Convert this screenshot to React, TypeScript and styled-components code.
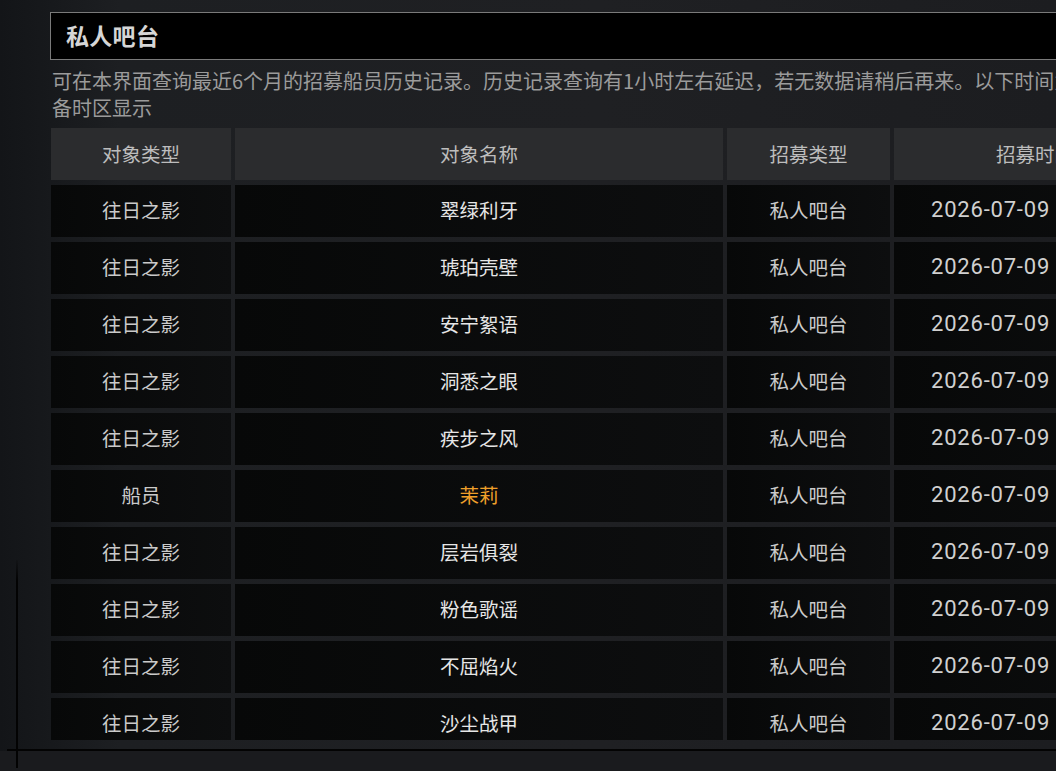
import React from "react";
import styled, { createGlobalStyle } from "styled-components";

const Global = createGlobalStyle`
  html, body {
    margin: 0;
    padding: 0;
    width: 1056px;
    height: 771px;
    overflow: hidden;
    background: #1c1e21;
  }
  body {
    font-family: "Noto Sans CJK SC", "Noto Sans", sans-serif;
  }
`;

const Screen = styled.div`
  position: relative;
  width: 1056px;
  height: 771px;
  overflow: hidden;
  background:
    linear-gradient(90deg, #131518 0px, #16181b 40px, #1d1f22 120px, #1f2023 600px, #1c1d20 1056px);
`;

const Page = styled.div`
  display: flex;
  flex-direction: column;
  width: 1140px;
  padding: 12px 0 0 50px;
  box-sizing: content-box;
`;

const TitleBox = styled.div`
  border: 1px solid #7a7a7a;
  background: #000;
  display: flex;
  align-items: center;
  padding: 0 0 3px 15px;
  box-sizing: content-box;
  height: 43px;
`;

const Title = styled.h1`
  margin: 0;
  font-size: 23px;
  font-weight: 700;
  color: #d6d6d6;
  letter-spacing: 0.3px;
`;

const Description = styled.p`
  margin: 7px 0 0 2px;
  width: 1048px;
  font-size: 20px;
  line-height: 27px;
  color: #9b9b9b;
`;

const TableClip = styled.div`
  margin-top: 7px;
  height: 612px;
  overflow: hidden;
`;

const Grid = styled.div`
  display: grid;
  grid-template-columns: 180px 488px 163px 282px;
  column-gap: 4px;
  row-gap: 5px;
  margin-left: 1px;
`;

const HeadCell = styled.div`
  height: 52px;
  box-sizing: border-box;
  padding-bottom: 2px;
  background: #2b2c2e;
  display: flex;
  align-items: center;
  justify-content: center;
  font-size: 19.5px;
  color: #bdbdbd;
`;

const Cell = styled.div<{ $tone?: "name" | "type" | "gold" }>`
  height: 52px;
  box-sizing: border-box;
  padding-bottom: 3px;
  background: linear-gradient(90deg, #070808, #0d0e0f);
  display: flex;
  align-items: center;
  justify-content: center;
  font-size: 19.5px;
  color: ${(p) =>
    p.$tone === "gold" ? "#f0a02a" : p.$tone === "name" ? "#e6e6e6" : "#cacaca"};
`;

const DateCell = styled(Cell)`
  justify-content: flex-start;
  padding-left: 37px;
  gap: 12px;
`;

const DateText = styled.span`
  font-family: Roboto, "Noto Sans", sans-serif;
  font-size: 22px;
  letter-spacing: 0.8px;
  color: #d0d0d0;
  white-space: nowrap;
`;

const FrameLineH = styled.div`
  position: absolute;
  left: 7px;
  right: 0;
  top: 749px;
  height: 2px;
  background: #030303;
`;

const FrameLineV = styled.div`
  position: absolute;
  left: 16px;
  top: 560px;
  width: 2px;
  height: 208px;
  background: linear-gradient(180deg, rgba(3,3,3,0.1) 0%, #030303 10%, #030303 100%);
`;

const BottomShade = styled.div`
  position: absolute;
  left: 0;
  right: 0;
  top: 751px;
  bottom: 0;
  background: #1a1b1e;
`;

type Row = { kind: string; name: string; time: string; gold?: boolean };

const rows: Row[] = [
  { kind: "往日之影", name: "翠绿利牙", time: "21:47:12" },
  { kind: "往日之影", name: "琥珀壳壁", time: "21:47:12" },
  { kind: "往日之影", name: "安宁絮语", time: "21:47:12" },
  { kind: "往日之影", name: "洞悉之眼", time: "21:47:12" },
  { kind: "往日之影", name: "疾步之风", time: "21:47:12" },
  { kind: "船员", name: "茉莉", time: "21:47:12", gold: true },
  { kind: "往日之影", name: "层岩俱裂", time: "21:47:12" },
  { kind: "往日之影", name: "粉色歌谣", time: "21:47:12" },
  { kind: "往日之影", name: "不屈焰火", time: "21:47:12" },
  { kind: "往日之影", name: "沙尘战甲", time: "21:47:12" },
  { kind: "往日之影", name: "星辉之冠", time: "21:47:12" },
];

export default function App() {
  return (
    <Screen>
      <Global />
      <Page>
        <TitleBox>
          <Title>私人吧台</Title>
        </TitleBox>
        <Description>
          可在本界面查询最近6个月的招募船员历史记录。历史记录查询有1小时左右延迟，若无数据请稍后再来。以下时间为设备时区显示
        </Description>
        <TableClip>
          <Grid>
            <HeadCell>对象类型</HeadCell>
            <HeadCell>对象名称</HeadCell>
            <HeadCell>招募类型</HeadCell>
            <HeadCell>招募时间</HeadCell>
            {rows.map((r, i) => (
              <React.Fragment key={i}>
                <Cell $tone="type">{r.kind}</Cell>
                <Cell $tone={r.gold ? "gold" : "name"}>{r.name}</Cell>
                <Cell $tone="type">私人吧台</Cell>
                <DateCell>
                  <DateText>2026-07-09</DateText>
                  <DateText>{r.time}</DateText>
                </DateCell>
              </React.Fragment>
            ))}
          </Grid>
        </TableClip>
      </Page>
      <BottomShade />
      <FrameLineH />
      <FrameLineV />
    </Screen>
  );
}
